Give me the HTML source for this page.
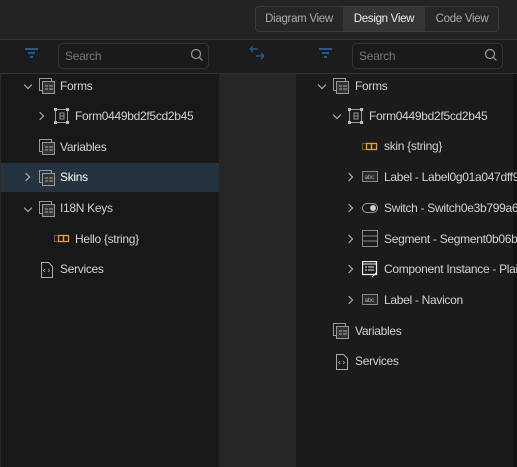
<!DOCTYPE html>
<html><head><style>
*{margin:0;padding:0;box-sizing:border-box}
body{width:517px;height:467px;background:#1b1b1b;font-family:"Liberation Sans",sans-serif;font-size:12px;color:#d2d2d2;position:relative;overflow:hidden;letter-spacing:-0.3px}
.a{position:absolute}
.row{position:absolute;height:30px;line-height:30px;white-space:nowrap}
.chev{position:absolute;width:6px;height:6px;border-right:1.3px solid #bbb;border-bottom:1.3px solid #bbb}
.dn{transform:rotate(45deg)}
.rt{transform:rotate(-45deg)}
</style></head><body>
<div class="a" style="left:0;top:0;width:517px;height:39px;background:#232323"></div>
<div class="a" style="left:255px;top:6px;width:244px;height:26px;border:1px solid #3a3a3a;border-radius:4px;background:#262626"></div>
<div class="a" style="left:343px;top:7px;width:82px;height:24px;background:#353535"></div>
<div class="a" style="left:255px;top:6px;width:88px;height:26px;line-height:26px;text-align:center;color:#aaa;font-size:11.5px">Diagram View</div>
<div class="a" style="left:343px;top:6px;width:82px;height:26px;line-height:26px;text-align:center;color:#eee;font-size:11.5px">Design View</div>
<div class="a" style="left:425px;top:6px;width:74px;height:26px;line-height:26px;text-align:center;color:#aaa;font-size:11.5px">Code View</div>
<div class="a" style="left:0;top:39px;width:517px;height:35px;background:#1c1c1c;border-top:1px solid #333;border-bottom:1px solid #333"></div>
<div class="a" style="left:0;top:74px;width:219px;height:393px;background:#181818;border-left:1px solid #2a2a2a"></div>
<div class="a" style="left:219px;top:74px;width:77px;height:393px;background:#262626"></div>
<div class="a" style="left:296px;top:74px;width:217px;height:393px;background:#1b1b1b"></div>
<div class="a" style="left:513px;top:74px;width:4px;height:393px;background:#121212"></div>
<!-- filter icons -->
<svg class="a" style="left:24px;top:46px" width="16" height="16"><path d="M1 3h13M4 7h7M6 11h3" stroke="#2a6fb5" stroke-width="1.6"/></svg>
<svg class="a" style="left:318px;top:46px" width="16" height="16"><path d="M1 3h13M4 7h7M6 11h3" stroke="#2a6fb5" stroke-width="1.6"/></svg>
<svg class="a" style="left:248px;top:45px" width="18" height="16"><path d="M2 4h8M2 4l3-3M2 4l3 3M16 11H8M16 11l-3-3M16 11l-3 3" stroke="#2a5f95" stroke-width="1.2" fill="none"/></svg>
<div class="a" style="left:58px;top:43px;width:151px;height:26px;border:1px solid #333;border-radius:5px;background:#1a1a1a;padding-left:6px;line-height:24px;color:#777">Search</div>
<div class="a" style="left:352px;top:43px;width:151px;height:26px;border:1px solid #333;border-radius:5px;background:#1a1a1a;padding-left:6px;line-height:24px;color:#777">Search</div>
<svg class="a" style="left:190px;top:48px" width="14" height="14"><circle cx="6" cy="6" r="4.5" stroke="#999" fill="none" stroke-width="1.2"/><path d="M9.5 9.5l3 3" stroke="#999" stroke-width="1.2"/></svg>
<svg class="a" style="left:484px;top:48px" width="14" height="14"><circle cx="6" cy="6" r="4.5" stroke="#999" fill="none" stroke-width="1.2"/><path d="M9.5 9.5l3 3" stroke="#999" stroke-width="1.2"/></svg>
<!-- selected -->
<div class="a" style="left:1px;top:163px;width:218px;height:29px;background:#253340"></div>

<svg width="0" height="0" style="position:absolute"><defs>
<g id="fm"><rect x="0.5" y="0.5" width="12" height="12" fill="none" stroke="#999"/><rect x="3.5" y="3.5" width="12" height="12" fill="#333" stroke="#999"/><path d="M6 8h3M6 11h3M10 8h4M10 11h4" stroke="#aaa"/></g>
<g id="frm"><rect x="1.5" y="1.5" width="12" height="13" fill="none" stroke="#999"/><rect x="0" y="0" width="3" height="3" fill="#bbb"/><rect x="12" y="0" width="3" height="3" fill="#bbb"/><rect x="0" y="13" width="3" height="3" fill="#bbb"/><rect x="12" y="13" width="3" height="3" fill="#bbb"/><path d="M6 5h4v6H6zM6 8h4" stroke="#999" fill="none"/></g>
<g id="str"><rect x="0.5" y="2.5" width="4" height="6" fill="none" stroke="#7a5a20"/><rect x="4.5" y="2.5" width="5" height="6" fill="none" stroke="#e2a030" stroke-width="1.3"/><rect x="9.5" y="2.5" width="5" height="6" fill="none" stroke="#e2a030" stroke-width="1.3"/></g>
<g id="abc"><rect x="0.5" y="0.5" width="15" height="10" fill="#2a2a2a" stroke="#888"/><text x="2.5" y="8" font-size="6.5" fill="#aaa" font-family="Liberation Sans">abc</text></g>
<g id="svc"><path d="M1.5 0.5h7l4 4v11h-11z" fill="none" stroke="#aaa"/><path d="M5 7l-1.5 1.5L5 10M8 7l1.5 1.5L8 10" stroke="#aaa" fill="none" stroke-width="0.8"/></g>
</defs></svg>

<!-- LEFT TREE -->
<div class="chev dn" style="left:25px;top:82px"></div>
<svg class="a" style="left:39px;top:78px" width="17" height="17"><use href="#fm"/></svg>
<div class="row" style="left:60px;top:71px">Forms</div>
<div class="chev rt" style="left:37px;top:113px"></div>
<svg class="a" style="left:54px;top:108px" width="16" height="16"><use href="#frm"/></svg>
<div class="row" style="left:75px;top:101px">Form0449bd2f5cd2b45</div>
<svg class="a" style="left:39px;top:139px" width="17" height="17"><use href="#fm"/></svg>
<div class="row" style="left:60px;top:132px">Variables</div>
<div class="chev rt" style="left:23px;top:174px"></div>
<svg class="a" style="left:39px;top:170px" width="17" height="17"><use href="#fm"/></svg>
<div class="row" style="left:60px;top:162px;color:#fff">Skins</div>
<div class="chev dn" style="left:25px;top:205px"></div>
<svg class="a" style="left:39px;top:201px" width="17" height="17"><use href="#fm"/></svg>
<div class="row" style="left:60px;top:193px">I18N Keys</div>
<svg class="a" style="left:54px;top:233px" width="16" height="12"><use href="#str"/></svg>
<div class="row" style="left:75px;top:224px">Hello {string}</div>
<svg class="a" style="left:40px;top:262px" width="14" height="17"><use href="#svc"/></svg>
<div class="row" style="left:60px;top:254px">Services</div>

<!-- RIGHT TREE -->
<div class="chev dn" style="left:319px;top:82px"></div>
<svg class="a" style="left:333px;top:78px" width="17" height="17"><use href="#fm"/></svg>
<div class="row" style="left:355px;top:71px">Forms</div>
<div class="chev dn" style="left:334px;top:112px"></div>
<svg class="a" style="left:348px;top:108px" width="16" height="16"><use href="#frm"/></svg>
<div class="row" style="left:369px;top:101px">Form0449bd2f5cd2b45</div>
<svg class="a" style="left:362px;top:141px" width="16" height="12"><use href="#str"/></svg>
<div class="row" style="left:384px;top:131px">skin {string}</div>
<div class="chev rt" style="left:346px;top:174px"></div>
<svg class="a" style="left:362px;top:171px" width="17" height="12"><use href="#abc"/></svg>
<div class="row" style="left:384px;top:162px">Label - Label0g01a047dff9</div>
<div class="chev rt" style="left:346px;top:205px"></div>
<svg class="a" style="left:362px;top:202px" width="16" height="12"><rect x="0.5" y="1.5" width="15" height="9" rx="4.5" fill="none" stroke="#999"/><circle cx="11" cy="6" r="3" fill="#ccc"/></svg>
<div class="row" style="left:384px;top:193px">Switch - Switch0e3b799a6</div>
<div class="chev rt" style="left:346px;top:236px"></div>
<svg class="a" style="left:362px;top:230px" width="16" height="18"><rect x="0.5" y="0.5" width="15" height="16" fill="none" stroke="#888"/><path d="M0.5 6h15M0.5 11h15" stroke="#888"/></svg>
<div class="row" style="left:384px;top:224px">Segment - Segment0b06b7</div>
<div class="chev rt" style="left:346px;top:266px"></div>
<svg class="a" style="left:362px;top:261px" width="16" height="17"><rect x="0.5" y="0.5" width="14" height="13" fill="none" stroke="#eee" stroke-width="1.3"/><path d="M0.5 3h14M3 6h2M3 9h2M6 6h6M6 9h6" stroke="#eee"/><path d="M10 16l4-4" stroke="#eee"/></svg>
<div class="row" style="left:384px;top:254px">Component Instance - Plai</div>
<div class="chev rt" style="left:346px;top:297px"></div>
<svg class="a" style="left:362px;top:294px" width="17" height="12"><use href="#abc"/></svg>
<div class="row" style="left:384px;top:285px">Label - Navicon</div>
<svg class="a" style="left:333px;top:323px" width="17" height="17"><use href="#fm"/></svg>
<div class="row" style="left:355px;top:316px">Variables</div>
<svg class="a" style="left:335px;top:354px" width="14" height="17"><use href="#svc"/></svg>
<div class="row" style="left:355px;top:346px">Services</div>
</body></html>
